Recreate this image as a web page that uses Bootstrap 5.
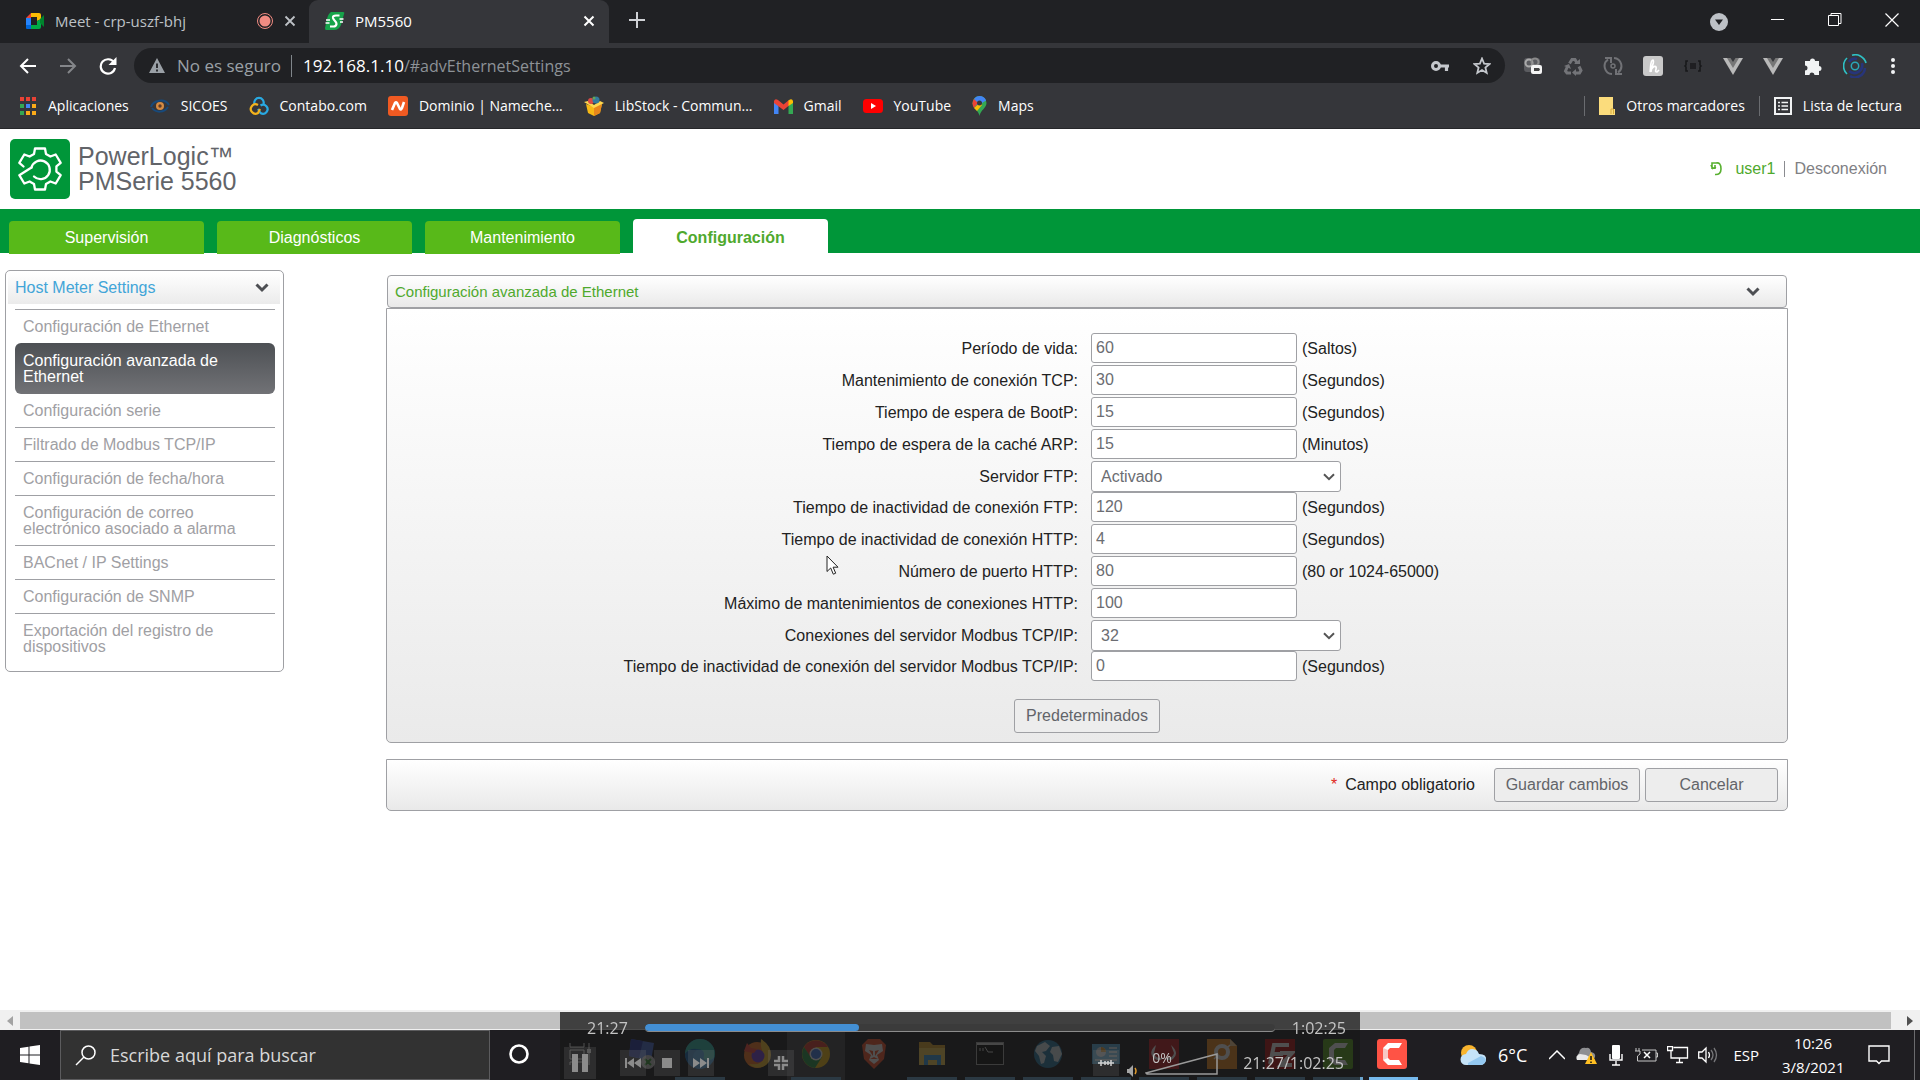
<!DOCTYPE html>
<html lang="es">
<head>
<meta charset="utf-8">
<meta name="viewport" content="width=device-width, initial-scale=1">
<title>PM5560</title>
<link rel="stylesheet" href="https://cdn.jsdelivr.net/npm/bootstrap@5.3.0/dist/css/bootstrap.min.css">
<style>
:root{--ui:"Open Sans","Noto Sans",sans-serif;--app:"Liberation Sans",Arial,sans-serif;--line:#9fa0a4;--green:#009639;--lime:#4fa92d}
body{font-family:var(--app);font-size:16px;line-height:20px;background:#fff;color:#222;overflow-x:hidden}
svg{display:block;flex:none}
a{text-decoration:none}
button{background:none;border:0;padding:0;color:inherit}
.chrome{font-family:var(--ui);font-size:14px;color:#fff;background:#35363a;border-bottom:1px solid #26272a}
.tabstrip{height:43px;background:#202124}
.tab-idle,.tab-live{height:43px;font-size:15px;gap:10px}
.tab-idle{width:309px;padding:0 13px 2px 25px;color:#bdc1c6;background:#202124}
.tab-idle .live{margin-left:auto}
.tab-live{width:300px;padding:0 14px 2px 15px;background:#35363a;border-radius:9px 9px 0 0}
.plus{margin-left:20px}
.winbtns{gap:43px;padding:0 21px 4px 0}
.toolbar{height:45px;padding:0 17px 0 19px;gap:22px}
.omni{height:35px;margin-left:-5px;padding:0 14px 0 15px;border-radius:18px;background:#202124;font-size:17px;min-width:0}
.omni .muted{color:#9aa0a6;padding-left:12px;padding-right:10px;border-right:1px solid #80868b;line-height:22px}
.omni .host{padding-left:11px}
.omni input{background:none;border:0;padding:0;color:#8d9297;outline:0;min-width:0;font-size:16px}
.exts{gap:20px;margin-left:-4px}
.exts button{width:20px;height:24px}
.marks{height:40px;padding:0 18px 4px 19px}
.marks a{color:#fff;gap:11px;white-space:nowrap}
.marks .set{gap:21px}
.marks .set-end{gap:14px}
.marks .sep{width:1px;height:20px;background:#6a6c70}
.apphead{height:80px;padding:0 33px 0 10px}
.appname{font-size:25px;line-height:25px;color:#626469}
.usr{color:var(--lime)}
.leave{color:#7f8084;border-left:1px solid #8a8b90;padding-left:10px;line-height:16px}
.appnav{height:45px;background:linear-gradient(var(--green) 44px,#fff 44px);padding-left:9px;gap:13px}
.appnav a{width:195px;height:33px;line-height:33px;background:#58b919;color:#fff;text-align:center;border-radius:4px 4px 0 0}
.appnav a.active{height:35px;line-height:37px;background:#fff;color:var(--lime);font-weight:bold}
.appbody{padding-left:5px}
.side{width:279px;margin-top:16px;border:1px solid var(--line);border-radius:5px;padding:1px 3px 8px 2px}
.side-h{height:32px;padding:0 11px 0 7px;color:#42a5d8;background:linear-gradient(#fff,#ebebeb)}
.side ul{margin:5px 5px 0 7px;padding:0;list-style:none}
.side li{border-top:1px solid var(--line)}
.side li a{display:block;padding:9px 8px 8px;line-height:16px;color:#9fa0a4}
.side li.on,.side li.on+li{border-top-width:0}
.side li.on a{color:#fff;background:linear-gradient(#4d5054,#717276);border-radius:6px;padding:10px 8px 9px}
.mainpane{margin:21px 132px 0 102px;min-width:0}
.pane-h{height:33px;margin:0 1px;padding:0 26px 0 7px;border:1px solid var(--line);border-radius:4px;background:linear-gradient(#fff,#e9e9e9);color:var(--lime);font-size:15px}
.pane-b{border:1px solid var(--line);border-radius:0 0 5px 5px;background:linear-gradient(#fff,#eaeaea);padding:24px 0 9px}
.fieldrow label{padding-right:9px}
.fieldrow .cell{padding-left:4px;gap:5px}
.fieldrow .form-control{width:206px;height:30px;margin-bottom:2px;padding:0 4px;border:1px solid var(--line);border-radius:3px;color:#6b6d72;font-size:16px;line-height:20px}
.fieldrow .form-select{width:250px;height:31px;padding:0 30px 0 9px;border:1px solid var(--line);border-radius:3px;color:#6b6d72;font-size:16px;line-height:20px;background:#fff url("data:image/svg+xml,%3Csvg xmlns='http://www.w3.org/2000/svg' width='12' height='8' viewBox='0 0 12 8'%3E%3Cpath d='M1 1.2l5 5 5-5' fill='none' stroke='%23555' stroke-width='2'/%3E%3C/svg%3E") no-repeat right 5px center;background-size:12px 8px}
.btn-plain{height:34px;border:1px solid var(--line);border-radius:3px;background:#ededed;color:#626469;font-size:16px;line-height:20px;padding:0 9px}
.btn-plain.wide{width:133px}
.btn-plain.save{width:146px}
.pane-f{margin-top:16px;height:52px;border:1px solid var(--line);border-radius:0 0 5px 5px;background:linear-gradient(#fff,#e9e9e9);padding-right:9px;gap:5px}
.pane-f .note{margin-right:14px}
.need{color:#e02b20}
.pointer{position:absolute;left:826px;top:555px}
.hscroll{height:20px;background:#f0f0f0;padding:2px 0 1px}
.hscroll .end{width:20px}
.hscroll .end.r{width:29px}
.hscroll .thumb{background:#c1c1c1}
.taskbar{height:50px;background:#1f1e22;color:#fff;font-family:var(--ui)}
.start{width:60px}
.seek{width:430px;background:#323232;border:1px solid #5c5c5e;padding-left:14px;gap:14px}
.seek input{background:none;border:0;color:#ddd;font-size:18px;outline:0;padding:0;width:300px}
.seek input::placeholder{color:#d8d8d8;opacity:1}
.slot{width:58px;height:50px;border-bottom:3px solid transparent}
.slots{margin-left:7px}
.slot.run{border-image:linear-gradient(90deg,transparent 5px,#6aa3cc 5px,#6aa3cc 53px,transparent 53px) 1;border-style:solid;border-width:0 0 3px}
.slot.focus{background:#48494c}
.slot.top{border-image:linear-gradient(90deg,transparent 3px,#76b9ed 3px,#76b9ed 50px,transparent 50px) 1}
.tray{padding-right:5px;font-size:15px}
.tray .temp{font-size:18px;margin-left:10px;margin-right:22px}
.tray .status{gap:9px}
.tray .lang{margin:0 23px 0 14px}
.clock{font-size:15px;line-height:24px;width:62px}
.edge{width:1px;height:50px;background:#6b6b6e}
.player{position:fixed;bottom:0;left:50%;margin-left:-400px;width:800px;height:68px;background:rgba(24,24,24,.76);color:#c4c4c4;font-family:var(--ui);font-size:16px}
.player .upper{height:31px;padding:0 14px 0 27px;gap:17px}
.player .progress{height:8px;border-radius:4px;background:#3b3b3b;border-bottom:1px solid #8b8b8b;--bs-progress-bar-bg:#438fd4}
.player .lower{height:37px;padding:2px 16px 0 4px}
.pb{width:26px;height:26px;background:rgba(120,120,120,.22)}
.pb.big{width:32px;height:32px}
.pb.far{margin-left:54px}
.vol{width:74px;height:26px}
.vol span{position:absolute;left:7px;top:0;font-size:14px;line-height:16px}
</style>
<script src="https://cdn.jsdelivr.net/npm/bootstrap@5.3.0/dist/js/bootstrap.bundle.min.js"></script>
</head>
<body class="d-flex flex-column min-vh-100">
<header class="chrome">
  <div class="tabstrip d-flex align-items-center">
    <div class="tab-idle d-flex align-items-center">
      <svg width="20" height="18" viewBox="0 0 20 18"><path d="M1 6l5-5v5z" fill="#ea4335"/><path d="M6 1h8q2 0 2 2v4l-4 2V5H6z" fill="#fbbc04"/><path d="M1 6h5v7H1z" fill="#2684fc"/><path d="M1 13h5v4H2q-1 0-1-1z" fill="#0066da"/><path d="M6 13h6V9l4-2v8q0 2-2 2H6z" fill="#00ac47"/><path d="M15 7l4-4v12l-4-4z" fill="#00832d"/></svg>
      <span>Meet - crp-uszf-bhj</span>
      <svg class="live" width="18" height="18" viewBox="0 0 18 18"><circle cx="9" cy="9" r="7.5" fill="none" stroke="#f28b82"/><circle cx="9" cy="9" r="5.5" fill="#f28b82"/></svg>
      <button aria-label="Cerrar Meet"><svg width="12" height="12" viewBox="0 0 12 12"><path d="M1.500 1.500l9 9m0-9l-9 9" stroke="#bdc1c6" stroke-width="1.800"/></svg></button>
    </div>
    <div class="tab-live d-flex align-items-center">
      <svg width="21" height="20" viewBox="0 0 21 20"><path d="M7 1h12q2 0 1 2l-3 11q-2 5-7 5H2q-1 0-1-2l2-9q1-5 4-7z" fill="#16a34a"/><path d="M15.500 4.500H12q-3.500 0-3 2.500.5 1.500 2 3t1.500 3q-.5 2.500-3 2.500H6" fill="none" stroke="#fff" stroke-width="2.200"/><path d="M19.500 8h-4m3.500 3h-3m-14-2h4m-4.500 3h4" fill="none" stroke="#fff" stroke-width="1.400"/></svg>
      <span>PM5560</span>
      <button class="ms-auto" aria-label="Cerrar PM5560"><svg width="12" height="12" viewBox="0 0 12 12"><path d="M1.500 1.500l9 9m0-9l-9 9" stroke="#fff" stroke-width="2"/></svg></button>
    </div>
    <button class="plus pb-1" aria-label="Nueva pestaña"><svg width="16" height="16" viewBox="0 0 16 16"><path d="M8 0v16M0 8h16" stroke="#cfd1d5" stroke-width="2"/></svg></button>
    <div class="winbtns d-flex align-items-center ms-auto">
      <button class="pt-1" aria-label="Buscar pestañas"><svg width="18" height="18" viewBox="0 0 18 18"><circle cx="9" cy="9" r="9" fill="#bdc1c6"/><path d="M5 6.500h8L9 12z" fill="#202124"/></svg></button>
      <button aria-label="Minimizar"><svg width="14" height="14" viewBox="0 0 14 14"><path d="M0 6.500h13" stroke="#fff"/></svg></button>
      <button aria-label="Restaurar"><svg width="14" height="14" viewBox="0 0 14 14"><path d="M.5 2.500h10v10H.5zM3 2.500v-2h10v10h-2.500" fill="none" stroke="#fff"/></svg></button>
      <button aria-label="Cerrar"><svg width="14" height="14" viewBox="0 0 14 14"><path d="M.5.5l13 13m0-13l-13 13" stroke="#fff" stroke-width="1.200"/></svg></button>
    </div>
  </div>
  <div class="toolbar d-flex align-items-center">
    <button aria-label="Atrás"><svg width="18" height="18" viewBox="0 0 18 18"><path d="M17 9H2m7-7L2 9l7 7" fill="none" stroke="#fff" stroke-width="2"/></svg></button>
    <button aria-label="Adelante"><svg width="18" height="18" viewBox="0 0 18 18"><path d="M1 9h15M9 2l7 7-7 7" fill="none" stroke="#84868a" stroke-width="2"/></svg></button>
    <button aria-label="Recargar"><svg width="18" height="18" viewBox="0 0 18 18"><path d="M15 5.500A7.200 7.200 0 1 0 16 11" fill="none" stroke="#fff" stroke-width="2.200"/><path d="M17.500 0v8h-8z" fill="#fff"/></svg></button>
    <div class="omni flex-grow-1 d-flex align-items-center">
      <svg width="16" height="15" viewBox="0 0 16 15"><path d="M8 0l8 15H0z" fill="#9aa0a6"/><path d="M8 5.500v4.500m0 1.500v2" stroke="#202124" stroke-width="1.800"/></svg>
      <span class="muted">No es seguro</span>
      <label class="host" for="url">192.168.1.10</label>
      <input class="flex-grow-1" id="url" type="text" value="/#advEthernetSettings">
      <svg width="18" height="12" viewBox="0 0 18 12"><circle cx="5" cy="6" r="3.500" fill="none" stroke="#c4c7cc" stroke-width="3"/><path d="M9 6h9M15.500 6v5" stroke="#c4c7cc" stroke-width="3.200"/></svg>
      <svg class="ms-4" width="18" height="18" viewBox="0 0 18 18"><path d="M9 1.500l2.100 5.100 5.500.4-4.200 3.500 1.300 5.400L9 13l-4.700 2.900 1.300-5.400L1.400 7l5.500-.4z" fill="none" stroke="#c4c7cc" stroke-width="1.800"/></svg>
    </div>
    <div class="exts d-flex align-items-center">
      <button aria-label="Extensión de grabación"><svg width="20" height="24" viewBox="0 0 20 24"><rect x="1" y="4" width="16" height="14" rx="3" fill="#5b5c60"/><circle cx="6" cy="9" r="3.500" fill="none" stroke="#aaa" stroke-width="2"/><circle cx="12" cy="8" r="3.500" fill="none" stroke="#8b8b8b" stroke-width="2"/><rect x="8" y="11" width="11" height="9" rx="2" fill="#f4f4f4"/><path d="M11 14h5l1 1.500-1 1.500h-5z" fill="#444"/></svg></button>
      <button aria-label="Reciclar"><svg width="20" height="24" viewBox="0 0 20 24"><path d="M6.500 9.500L9 5.500h3l2 3.500M4.500 12.500L2.500 17l1.500 2h4M12 19h4.500l1.500-2.500-2-4" fill="none" stroke="#737478" stroke-width="3"/><path d="M11 10h6V5zM1 12l5-2 2 5zM13 15v7l-4-3.500z" fill="#737478"/></svg></button>
      <button aria-label="Sincronizar"><svg width="20" height="24" viewBox="0 0 20 24"><path d="M9 20A8 8 0 0 1 5 5.500M11 4a8 8 0 0 1 4 14.500M2 4h6v5M19 20h-6v-5" fill="none" stroke="#717276" stroke-width="2"/><circle cx="10" cy="12" r="2" fill="none" stroke="#717276" stroke-width="1.500"/></svg></button>
      <button aria-label="Honey"><svg width="20" height="24" viewBox="0 0 20 24"><rect y="2" width="20" height="20" rx="3" fill="#c9c9c9"/><path d="M8 18c0-5 4-10 2-12-3 0-2 8-3 12 1-4 5-7 6-5 1 2-2 5 1 5l2-2" fill="none" stroke="#fff" stroke-width="1.700"/></svg></button>
      <button aria-label="JSON"><svg width="20" height="24" viewBox="0 0 20 24"><path d="M5 7H3v4l-1 1 1 1v4h2M15 7h2v4l1 1-1 1v4h-2M7 10h6m-6 2h6m-6 2h6" fill="none" stroke="#18191b" stroke-width="1.600"/></svg></button>
      <button aria-label="Vue"><svg width="20" height="24" viewBox="0 0 20 24"><path d="M0 4h20L10 21z" fill="#b9b9b9"/><path d="M4 4h12l-6 10z" fill="#777"/><path d="M7.500 4h5L10 8z" fill="#35363a"/></svg></button>
      <button aria-label="Vue beta"><svg width="20" height="24" viewBox="0 0 20 24"><path d="M0 4h20L10 21z" fill="#b9b9b9"/><path d="M4 4h12l-6 10z" fill="#777"/><path d="M7.500 4h5L10 8z" fill="#35363a"/></svg></button>
      <button aria-label="Extensiones"><svg width="20" height="24" viewBox="0 0 20 24"><path d="M2 7h5a2.500 2.500 0 1 1 5 0h4v5a2.500 2.500 0 1 1 0 5v4h-4.500a2.300 2.300 0 0 0-5 0H2v-4.500a2.400 2.400 0 0 0 0-5z" fill="#f1f3f4"/></svg></button>
      <button aria-label="Perfil"><svg width="24" height="24" viewBox="0 0 24 24"><circle cx="12" cy="12" r="3.700" fill="none" stroke="#2aa7b8" stroke-width="1.500"/><path d="M9 1.300A11 11 0 0 1 23 9M4 4a11 11 0 0 0 0 16" fill="none" stroke="#2fc0c4" stroke-width="1.700"/><path d="M19 9a8 8 0 0 1-13 8M22 14a10 10 0 0 1-15 8M6 8a7 7 0 0 1 8-3" fill="none" stroke="#27357a" stroke-width="2.600"/></svg></button>
      <button aria-label="Menú"><svg width="20" height="24" viewBox="0 0 20 24"><g fill="#f1f3f4"><circle cx="10" cy="6" r="2"/><circle cx="10" cy="12" r="2"/><circle cx="10" cy="18" r="2"/></g></svg></button>
    </div>
  </div>
  <nav class="marks d-flex align-items-center justify-content-between" aria-label="Marcadores">
    <div class="set d-flex align-items-center">
      <a class="d-flex align-items-center" href="#"><svg width="18" height="18" viewBox="0 0 18 18"><path d="M1 0h4v4H1zM7 0h4v4H7zM13 0h4v4h-4z" fill="#e94235"/><path d="M1 7h4v4H1z" fill="#34a853"/><path d="M7 7h4v4H7z" fill="#4285f4"/><path d="M13 7h4v4h-4zM13 14h4v4h-4zM7 14h4v4H7z" fill="#fbab19"/><path d="M1 14h4v4H1z" fill="#34a853"/></svg>Aplicaciones</a>
      <a class="d-flex align-items-center" href="#"><svg width="20" height="14" viewBox="0 0 20 14"><path d="M1 8C3 1 15-1 19 6M2 9c4 5 12 5 16-1" fill="none" stroke="#174a7c" stroke-width="2"/><circle cx="10" cy="7" r="4" fill="#d48b43"/><circle cx="10" cy="7" r="1.700" fill="#5c3c2a"/></svg>SICOES</a>
      <a class="d-flex align-items-center" href="#"><svg width="20" height="20" viewBox="0 0 20 20"><path d="M5.500 8a4.700 4.700 0 1 1 9 0" fill="none" stroke="#29a9e1" stroke-width="2.200"/><path d="M11.500 9.500a4.500 4.500 0 1 1 0 7.500L9 13" fill="none" stroke="#29a9e1" stroke-width="2.200"/><path d="M9 9a4.700 4.700 0 1 0 0 8l2-4" fill="none" stroke="#f4b31c" stroke-width="2.200"/></svg>Contabo.com</a>
      <a class="d-flex align-items-center" href="#"><svg width="20" height="20" viewBox="0 0 20 20"><rect width="20" height="20" rx="3" fill="#f05a22"/><path d="M4 14l3-7q1-1 2 0l3 6q1 1 2-1l2-6" fill="none" stroke="#fff" stroke-width="2.600"/></svg>Dominio | Nameche...</a>
      <a class="d-flex align-items-center" href="#"><svg width="20" height="20" viewBox="0 0 20 20"><path d="M2 8l8 3 8-3-2 9-6 3-6-3z" fill="#f7b915"/><path d="M10 11l8-3-2 9-6 3z" fill="#e8871c"/><path d="M0 6l4-1 6 4 6-4 4 2-10 5z" fill="#ffd84f"/><circle cx="7" cy="5" r="3" fill="#d94b45"/><circle cx="12" cy="4" r="3.500" fill="#337a9d"/><circle cx="10" cy="2" r="1.500" fill="#62a557"/></svg>LibStock - Commun...</a>
      <a class="d-flex align-items-center" href="#"><svg width="19" height="15" viewBox="0 0 19 15"><path d="M0 2v13h4.500V6z" fill="#4285f4"/><path d="M14.500 6v9H19V2z" fill="#34a853"/><path d="M0 2q1-3 4-1l5.500 4.500L15 1v5.500l-5.500 4.500L0 4z" fill="#ea4335"/><path d="M14.500 1.500Q18-1 19 2v2l-4.500 3z" fill="#fbbc04"/></svg>Gmail</a>
      <a class="d-flex align-items-center" href="#"><svg width="20" height="14" viewBox="0 0 20 14"><rect width="20" height="14" rx="3.500" fill="#f00"/><path d="M8 4l5 3-5 3z" fill="#fff"/></svg>YouTube</a>
      <a class="d-flex align-items-center" href="#"><svg width="15" height="20" viewBox="0 0 15 20"><path d="M7.500 0a7 7 0 0 1 7 7c0 5-6 7-7 13C7 15 .5 12 .5 7a7 7 0 0 1 7-7z" fill="#34a853"/><path d="M7.500 0a7 7 0 0 1 6.600 4.500L5 10 2 3q2-3 5.500-3z" fill="#4285f4"/><path d="M2 3l4 4-4 5Q-1 7 2 3z" fill="#ea4335"/><path d="M2 12l7-6 1 3-5 6z" fill="#fbbc04"/><circle cx="7.500" cy="7" r="2.500" fill="#35363a"/></svg>Maps</a>
    </div>
    <div class="set-end d-flex align-items-center">
      <span class="sep"></span>
      <a class="d-flex align-items-center" href="#"><svg width="16" height="18" viewBox="0 0 16 18"><path d="M0 0h14v12h2v6H0z" fill="#fbdc7c"/><path d="M12 17v-5h2.500v5" fill="none" stroke="#d8ad3c"/></svg>Otros marcadores</a>
      <span class="sep"></span>
      <a class="d-flex align-items-center" href="#"><svg width="18" height="18" viewBox="0 0 18 18"><rect x="1" y="1" width="16" height="16" fill="none" stroke="#f1f3f4" stroke-width="2"/><path d="M4 5.500h2m1.500 0H14M4 9h2m1.500 0H14M4 12.500h2m1.500 0H14" stroke="#f1f3f4" stroke-width="1.700"/></svg>Lista de lectura</a>
    </div>
  </nav>
</header>

<main class="flex-grow-1">
  <div class="apphead d-flex align-items-center">
    <svg width="60" height="60" viewBox="0 0 60 60"><rect width="60" height="60" rx="5" fill="#009639"/><g fill="none" stroke="#fff" stroke-width="2.300" stroke-linejoin="round" stroke-linecap="round"><path d="M13.500 27.500l-4.200-3.700 5-8.300 5.300 2L24 15l1-5.500h10l1 5.500 4.400 2.500 5.300-2 5 8.300-4.300 3.600v5.200l4.300 3.600-5 8.300-5.300-2L36 45l-1 5.500H25L24 45l-4.400-2.500-5.300 2-5-8.300L21.500 28.500"/><path d="M21.500 28.500a9.300 9.300 0 1 1 2.500 9"/></g></svg>
    <div class="appname ms-2">PowerLogic™<br>PMSerie 5560</div>
    <div class="ms-auto d-flex align-items-center gap-2">
      <svg class="me-1" width="13" height="14" viewBox="0 0 13 14"><path d="M2 7V1h4q5-1 5 6 0 6-6 5.500M1 3l1.500 3.500L6 5M5 3v4" fill="none" stroke="#58b030" stroke-width="1.600"/></svg>
      <span class="usr">user1</span>
      <a class="leave" href="#">Desconexión</a>
    </div>
  </div>
  <nav class="appnav d-flex align-items-end" aria-label="Secciones">
    <a href="#">Supervisión</a><a href="#">Diagnósticos</a><a href="#">Mantenimiento</a><a class="active" href="#" aria-current="page">Configuración</a>
  </nav>
  <div class="appbody d-flex align-items-start">
    <aside class="side flex-shrink-0">
      <div class="side-h d-flex align-items-center justify-content-between">Host Meter Settings
        <svg width="14" height="10" viewBox="0 0 14 10"><path d="M1.500 1.500L7 7l5.500-5.500" fill="none" stroke="#4d4f53" stroke-width="3"/></svg></div>
      <ul>
        <li><a href="#">Configuración de Ethernet</a></li>
        <li class="on"><a href="#">Configuración avanzada de Ethernet</a></li>
        <li><a href="#">Configuración serie</a></li>
        <li><a href="#">Filtrado de Modbus TCP/IP</a></li>
        <li><a href="#">Configuración de fecha/hora</a></li>
        <li><a href="#">Configuración de correo electrónico asociado a alarma</a></li>
        <li><a href="#">BACnet / IP Settings</a></li>
        <li><a href="#">Configuración de SNMP</a></li>
        <li><a href="#">Exportación del registro de dispositivos</a></li>
      </ul>
    </aside>
    <form class="mainpane flex-grow-1">
      <div class="pane-h d-flex align-items-center justify-content-between">Configuración avanzada de Ethernet
        <svg width="14" height="10" viewBox="0 0 14 10"><path d="M1.500 1.500L7 7l5.500-5.500" fill="none" stroke="#4d4f53" stroke-width="3"/></svg></div>
      <div class="pane-b">
        <div class="fieldrow row g-0 align-items-center"><label class="col-6 text-end" for="f1">Período de vida:</label><div class="cell col-6 d-flex align-items-center"><input class="form-control" id="f1" type="text" value="60"><span>(Saltos)</span></div></div>
        <div class="fieldrow row g-0 align-items-center"><label class="col-6 text-end" for="f2">Mantenimiento de conexión TCP:</label><div class="cell col-6 d-flex align-items-center"><input class="form-control" id="f2" type="text" value="30"><span>(Segundos)</span></div></div>
        <div class="fieldrow row g-0 align-items-center"><label class="col-6 text-end" for="f3">Tiempo de espera de BootP:</label><div class="cell col-6 d-flex align-items-center"><input class="form-control" id="f3" type="text" value="15"><span>(Segundos)</span></div></div>
        <div class="fieldrow row g-0 align-items-center"><label class="col-6 text-end" for="f4">Tiempo de espera de la caché ARP:</label><div class="cell col-6 d-flex align-items-center"><input class="form-control" id="f4" type="text" value="15"><span>(Minutos)</span></div></div>
        <div class="fieldrow row g-0 align-items-center"><label class="col-6 text-end" for="f5">Servidor FTP:</label><div class="cell col-6 d-flex align-items-center"><select class="form-select" id="f5"><option>Activado</option></select></div></div>
        <div class="fieldrow row g-0 align-items-center"><label class="col-6 text-end" for="f6">Tiempo de inactividad de conexión FTP:</label><div class="cell col-6 d-flex align-items-center"><input class="form-control" id="f6" type="text" value="120"><span>(Segundos)</span></div></div>
        <div class="fieldrow row g-0 align-items-center"><label class="col-6 text-end" for="f7">Tiempo de inactividad de conexión HTTP:</label><div class="cell col-6 d-flex align-items-center"><input class="form-control" id="f7" type="text" value="4"><span>(Segundos)</span></div></div>
        <div class="fieldrow row g-0 align-items-center"><label class="col-6 text-end" for="f8">Número de puerto HTTP:</label><div class="cell col-6 d-flex align-items-center"><input class="form-control" id="f8" type="text" value="80"><span>(80 or 1024-65000)</span></div></div>
        <div class="fieldrow row g-0 align-items-center"><label class="col-6 text-end" for="f9">Máximo de mantenimientos de conexiones HTTP:</label><div class="cell col-6 d-flex align-items-center"><input class="form-control" id="f9" type="text" value="100"></div></div>
        <div class="fieldrow row g-0 align-items-center"><label class="col-6 text-end" for="f10">Conexiones del servidor Modbus TCP/IP:</label><div class="cell col-6 d-flex align-items-center"><select class="form-select" id="f10"><option>32</option></select></div></div>
        <div class="fieldrow row g-0 align-items-center"><label class="col-6 text-end" for="f11">Tiempo de inactividad de conexión del servidor Modbus TCP/IP:</label><div class="cell col-6 d-flex align-items-center"><input class="form-control" id="f11" type="text" value="0"><span>(Segundos)</span></div></div>
        <div class="text-center mt-3"><button class="btn-plain save" type="button">Predeterminados</button></div>
      </div>
      <div class="pane-f d-flex align-items-center justify-content-end">
        <span class="note"><span class="need me-2">*</span>Campo obligatorio</span>
        <button class="btn-plain save" type="submit">Guardar cambios</button>
        <button class="btn-plain wide" type="button">Cancelar</button>
      </div>
    </form>
  </div>
</main>
<svg class="pointer" width="14" height="21" viewBox="0 0 14 21"><path d="M1 1v15.500l3.700-3.500 2.600 6.200 2.400-1-2.600-6H12z" fill="#fff" stroke="#222"/></svg>

<div class="hscroll d-flex" aria-hidden="true">
  <div class="end d-flex align-items-center justify-content-center"><svg width="6" height="10" viewBox="0 0 6 10"><path d="M6 0v10L0 5z" fill="#a3a3a3"/></svg></div>
  <div class="thumb flex-grow-1"></div>
  <div class="end r d-flex align-items-center justify-content-center"><svg class="ms-2" width="6" height="10" viewBox="0 0 6 10"><path d="M0 0v10l6-5z" fill="#505050"/></svg></div>
</div>
<footer class="taskbar d-flex">
  <button class="start d-flex align-items-center justify-content-center" aria-label="Inicio"><svg width="20" height="20" viewBox="0 0 20 20"><path d="M0 3l8.500-1.200v7.700H0zM9.500 1.600L20 0v9.500H9.500zM0 10.500h8.500v7.800L0 17zM9.500 10.500H20V20L9.500 18.400z" fill="#fff"/></svg></button>
  <div class="seek d-flex align-items-center"><svg width="21" height="21" viewBox="0 0 21 21"><circle cx="13.500" cy="7.500" r="6.500" fill="none" stroke="#fff" stroke-width="1.500"/><path d="M9 12l-8 8" stroke="#fff" stroke-width="1.500"/></svg><input type="search" placeholder="Escribe aquí para buscar" aria-label="Escribe aquí para buscar"></div>
  <button class="slot d-flex align-items-center justify-content-center" aria-label="Cortana"><svg width="20" height="20" viewBox="0 0 20 20"><circle cx="10" cy="10" r="8.500" fill="none" stroke="#fff" stroke-width="2.600"/></svg></button>
  <div class="slots d-flex">
    <button class="slot d-flex align-items-center justify-content-center" aria-label="Vista de tareas"><svg width="30" height="24" viewBox="0 0 30 24"><path d="M1 1v4h14V1M1 8h14v9H1zM1 23v-3h14v3M20 1v22" fill="none" stroke="#fff"/><path d="M18 7h4v4h-4z" fill="#fff"/></svg></button>
    <button class="slot d-flex align-items-center justify-content-center" aria-label="Escritorio remoto"><svg width="30" height="32" viewBox="0 0 30 32"><path d="M4 1l23 4-3 18-22-5z" fill="#4a6fd4"/><path d="M4 1l12 2-4 17-10-2z" fill="#2638a8"/><circle cx="21" cy="24" r="7" fill="#c8c8c8"/><path d="M18 21l3 3-3 3m6-6l-3 3 3 3" fill="none" stroke="#3a9a3a" stroke-width="2"/></svg></button>
    <button class="slot run d-flex align-items-center justify-content-center" aria-label="Edge"><svg width="30" height="30" viewBox="0 0 30 30"><circle cx="15" cy="15" r="15" fill="#1b7fcb"/><path d="M0 15a15 15 0 0 1 30 0q0 6-7 6-6 0-4-4 1-7-7-7Q4 9 0 15z" fill="#35c1b0"/><path d="M12 11q-6 4-3 11t13 5q-7 5-14 1T0 15q5-6 12-4z" fill="#1669b5"/></svg></button>
    <button class="slot d-flex align-items-center justify-content-center" aria-label="Firefox"><svg width="30" height="30" viewBox="0 0 30 30"><circle cx="14" cy="16" r="13" fill="#ff7b22"/><path d="M18 0q10 6 10 16a13 13 0 0 1-22 9q16 2 15-10-4-5-3-15z" fill="#ffc530"/><circle cx="15" cy="17" r="6.500" fill="#7642d8"/><path d="M1 12L4 4l4 5 6 1-3 4-6-1z" fill="#ff4b3a"/></svg></button>
    <button class="slot run focus d-flex align-items-center justify-content-center" aria-label="Chrome"><svg width="28" height="28" viewBox="0 0 28 28"><circle cx="14" cy="14" r="14" fill="#fbc116"/><path d="M14 7h12A14 14 0 0 0 2 7l6 10z" fill="#e33b2e"/><path d="M2 7a14 14 0 0 0 11 21l7-11-10 2z" fill="#279847"/><circle cx="14" cy="14" r="6.500" fill="#fff"/><circle cx="14" cy="14" r="5" fill="#3f7de8"/></svg></button>
    <button class="slot d-flex align-items-center justify-content-center" aria-label="Brave"><svg width="26" height="30" viewBox="0 0 26 30"><path d="M7 0h12l6 6-2 14-10 10L3 20 1 6z" fill="#fb542b"/><path d="M13 6l8-1 1 7-6 4 2 5-5 4-5-4 2-5-6-4 1-7z" fill="#fff"/><path d="M8 11l4 1v5zM18 11l-4 1v5zM9 20l4-2 4 2" fill="#fb542b"/></svg></button>
    <button class="slot run d-flex align-items-center justify-content-center" aria-label="Explorador"><svg width="28" height="24" viewBox="0 0 28 24"><path d="M1 0h11l3 3h12v20H1z" fill="#e2a92c"/><path d="M1 6h26v17H1z" fill="#f9cf55"/><path d="M6 23V13h17v10h-4v-5h-9v5z" fill="#3a9fe0"/></svg></button>
    <button class="slot run d-flex align-items-center justify-content-center" aria-label="Consola"><svg width="28" height="23" viewBox="0 0 28 23"><rect x=".5" y=".5" width="27" height="22" fill="#111" stroke="#aaa"/><path d="M1 2h26" stroke="#ddd" stroke-width="2"/><path d="M4 6v3m3-3v3m2-4l3 5h5" fill="none" stroke="#ddd"/></svg></button>
    <button class="slot run d-flex align-items-center justify-content-center" aria-label="Globo"><svg width="28" height="28" viewBox="0 0 28 28"><circle cx="14" cy="14" r="14" fill="#2a7ca8"/><path d="M3 6l8-4 5 4-4 5-4 1 4 4-2 7-3 1-2-8-4-5zM18 7l7-1 3 8-4 8-4-1-1-6-3-3z" fill="#dce9ee"/></svg></button>
    <button class="slot run d-flex align-items-center justify-content-center" aria-label="Panel"><svg width="28" height="20" viewBox="0 0 28 20"><rect width="28" height="20" fill="#5eb2e4"/><circle cx="9" cy="8" r="5" fill="#e8eef2"/><path d="M9 8V3a5 5 0 0 1 5 5z" fill="#f4a836"/><path d="M17 4h8M17 8h8M17 12h8M3 16h22" stroke="#fff" stroke-width="1.500"/></svg></button>
    <button class="slot run d-flex align-items-center justify-content-center" aria-label="Red"><svg width="30" height="30" viewBox="0 0 30 30"><rect width="30" height="30" fill="#c51a22"/><path d="M7 6Q-2 14 6 20q5 3 8-1-8 1-9-5M22 6q9 8 2 14-5 3-8-1 8 1 9-5" fill="#fff"/></svg></button>
    <button class="slot run d-flex align-items-center justify-content-center" aria-label="PDF"><svg width="30" height="30" viewBox="0 0 30 30"><path d="M0 0h23l7 7v23H0z" fill="#ef8c1f"/><path d="M23 0v7h7z" fill="#fbd09a"/><circle cx="15" cy="13" r="6" fill="none" stroke="#fff" stroke-width="4"/><path d="M7 20l4-4M19 10l4-4" fill="none" stroke="#fff" stroke-width="1.500"/></svg></button>
    <button class="slot run d-flex align-items-center justify-content-center" aria-label="FileZilla"><svg width="30" height="30" viewBox="0 0 30 30"><rect width="30" height="30" fill="#b90f0f"/><path d="M5 25L9 6h15M7 15h11M15 14h12L16 26h11" fill="none" stroke="#fff" stroke-width="4"/></svg></button>
    <button class="slot run d-flex align-items-center justify-content-center" aria-label="Camtasia"><svg width="30" height="30" viewBox="0 0 30 30"><rect width="30" height="30" rx="2" fill="#5aa51b"/><path d="M25 4H12L6 9v12l6 5h13l-3-5h-9l-2-2v-8l2-2h9z" fill="#fff"/></svg></button>
    <button class="slot run top d-flex align-items-center justify-content-center pe-2" aria-label="Grabadora"><svg width="30" height="30" viewBox="0 0 30 30"><rect width="30" height="30" rx="3" fill="#ff5345"/><path d="M25 4H11L6 9v12l5 5h14l-3-5h-9l-2-2v-8l2-2h9z" fill="#fff"/><path d="M6 9l5 2v8l-5 2z" fill="#f7c9c4"/></svg></button>
  </div>
  <div class="tray d-flex align-items-center ms-auto">
    <svg width="28" height="21" viewBox="0 0 28 21"><circle cx="9" cy="8" r="8" fill="#f8b42e"/><path d="M6 20a5.500 5.500 0 0 1 0-11q3-7 10-4 2 1 3 4 8 0 7 6-1 5-6 5z" fill="#c5e3f8"/><path d="M8 18l13-7q4 1 5 4-1 5-6 5H8z" fill="#93c8f0"/></svg>
    <span class="temp">6°C</span>
    <div class="status d-flex align-items-center">
      <svg width="16" height="10" viewBox="0 0 16 10"><path d="M0 9l8-8 8 8" fill="none" stroke="#fff" stroke-width="1.500"/></svg>
      <svg width="24" height="20" viewBox="0 0 24 20"><path d="M6 15a4 4 0 0 1-1-7q1-6 7-5 4-1 5 4 5 1 4 5-1 3-4 3z" fill="#8e8f92"/><path d="M3 15a4 4 0 0 1 3-6l6 1 9 5z" fill="#e9e9e9"/><path d="M17 7l6 12H11z" fill="#ffbf22"/><path d="M17 11v4m0 1.500V18" stroke="#111" stroke-width="1.500"/></svg>
      <svg width="18" height="21" viewBox="0 0 18 21"><rect x="5" width="8" height="14" rx="1" fill="#fff"/><path d="M3 9v6h12V9M9 16v4m-4 0h8" fill="none" stroke="#fff" stroke-width="1.400"/></svg>
      <svg width="24" height="16" viewBox="0 0 24 16"><path d="M2 1v3m3-3v3M1 4h5v3q-2.500 2-2.500 2v5H22V3H8M22 6h1.500v4H22" fill="none" stroke="#c7c7c7"/><path d="M10 5l6 6m0-6l-6 6" stroke="#fff" stroke-width="1.500"/></svg>
      <svg width="22" height="18" viewBox="0 0 22 18"><path d="M6.500 1.500H20.500v10.500H4V5M9 16.500h7M12.500 12v4.500M.5.5h5v4h-5zM1 4.500h4" fill="none" stroke="#fff" stroke-width="1.300"/></svg>
      <svg width="21" height="18" viewBox="0 0 21 18"><path d="M.7 6H4l4-4v14l-4-4H.7z" fill="none" stroke="#fff" stroke-width="1.300"/><path d="M10.500 6q2 3 0 6" fill="none" stroke="#fff" stroke-width="1.300"/><path d="M13 4q4 5 0 10M16 2q5 7 0 14" fill="none" stroke="#77777a" stroke-width="1.300"/></svg>
    </div>
    <span class="lang">ESP</span>
    <div class="clock text-center text-nowrap">10:26<br>3/8/2021</div>
    <svg class="ms-4 me-4" width="22" height="21" viewBox="0 0 22 21"><path d="M1 1h20v15h-7.500L11 18.500 8.500 16H1z" fill="none" stroke="#fff" stroke-width="1.400"/></svg>
    <span class="edge"></span>
  </div>
</footer>

<section class="player" aria-label="Reproductor">
  <div class="upper d-flex align-items-center">
    <span>21:27</span>
    <div class="progress flex-grow-1" role="progressbar" aria-label="Avance" aria-valuenow="34" aria-valuemin="0" aria-valuemax="100"><div class="progress-bar rounded-pill" style="width:34%"></div></div>
    <span>1:02:25</span>
  </div>
  <div class="lower d-flex align-items-center">
    <button class="pb big d-flex align-items-center justify-content-center" aria-label="Pausa"><svg width="16" height="18" viewBox="0 0 16 18"><path d="M0 0h6v18H0zM10 0h6v18h-6z" fill="#8b8b8b"/></svg></button>
    <button class="pb ms-4 d-flex align-items-center justify-content-center" aria-label="Anterior"><svg width="16" height="10" viewBox="0 0 16 10"><path d="M0 0h2v10H0zM9 0v10L2 5zM16 0v10L9 5z" fill="#8b8b8b"/></svg></button>
    <button class="pb ms-2 d-flex align-items-center justify-content-center" aria-label="Detener"><svg width="10" height="10" viewBox="0 0 10 10"><path d="M0 0h10v10H0z" fill="#8b8b8b"/></svg></button>
    <button class="pb ms-2 d-flex align-items-center justify-content-center" aria-label="Siguiente"><svg width="16" height="10" viewBox="0 0 16 10"><path d="M14 0h2v10h-2zM7 0v10l7-5zM0 0v10l7-5z" fill="#8b8b8b"/></svg></button>
    <button class="pb far d-flex align-items-center justify-content-center" aria-label="Salir de pantalla completa"><svg width="14" height="14" viewBox="0 0 14 14"><path d="M5 0v5H0M9 0v5h5M5 14V9H0M9 14V9h5" fill="none" stroke="#8b8b8b" stroke-width="2.500"/></svg></button>
    <button class="pb ms-auto d-flex align-items-center justify-content-center" aria-label="Ajustes"><svg width="16" height="6" viewBox="0 0 16 6"><path d="M0 3h16M3 0v6M7 1v4m3-4v4m3-5v6" stroke="#d0d0d0" stroke-width="1.500"/></svg></button>
    <svg class="ms-2 mt-3" width="10" height="12" viewBox="0 0 10 12"><path d="M0 4h2l4-4v12L2 8H0z" fill="#a5a5a5"/><path d="M8 3q2 3 0 6" fill="none" stroke="#e09a2c" stroke-width="1.500"/></svg>
    <div class="vol position-relative mx-2"><svg width="74" height="26" viewBox="0 0 74 26"><path d="M1 23L72 4v20H2z" fill="none" stroke="#9a9a9a" stroke-width="1.500"/></svg><span>0%</span></div>
    <span class="ms-3">21:27/1:02:25</span>
  </div>
</section>
</body>
</html>
